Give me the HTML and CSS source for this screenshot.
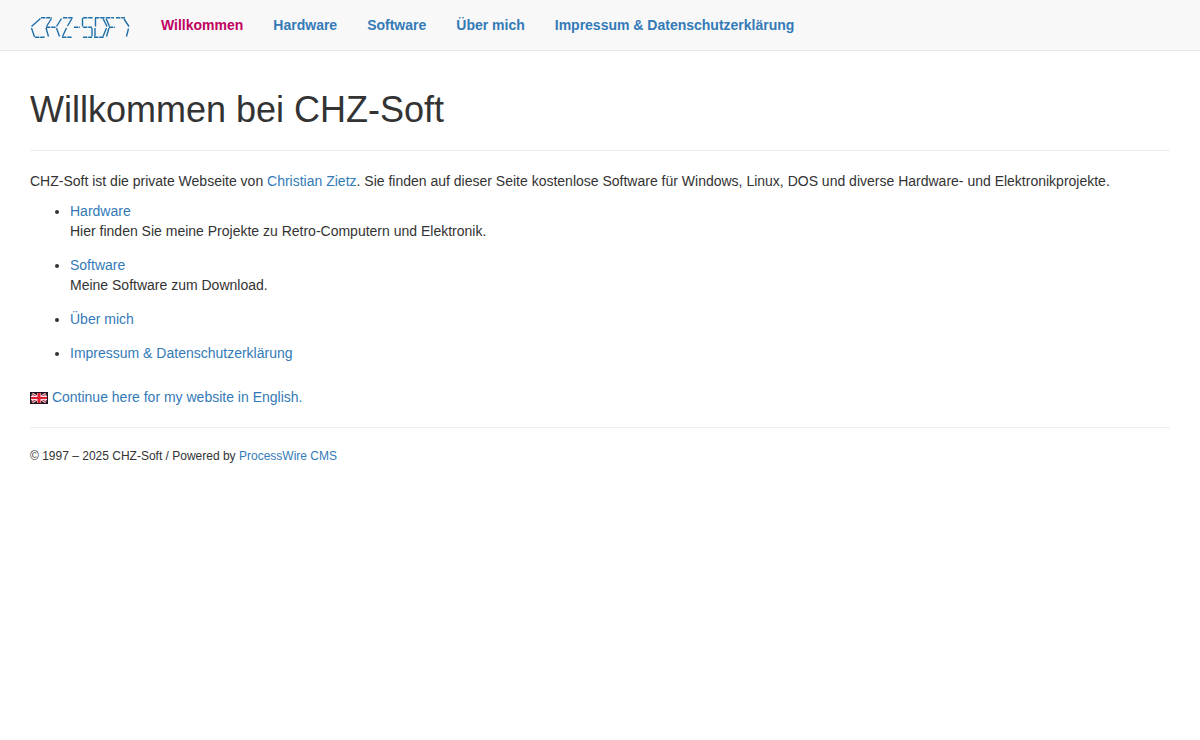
FILE: index.html
```html
<!DOCTYPE html>
<html lang="de">
<head>
	<meta charset="UTF-8">
	<meta name="viewport" content="width=device-width, initial-scale=1">
	<title>Willkommen bei CHZ-Soft</title>
	<link rel="stylesheet" href="styles.css">
</head>
<body>
	<nav class="navbar">
		<a class="brand" href="#" aria-label="CHZ-Soft">
			<svg class="logo" width="101" height="24" viewBox="0 0 101 24">
				<!-- horizontal segments -->
				<g stroke-width="1.4" stroke-dasharray="4.4 .8">
					<path d="M11 2.7H22M5 22.3H15M16 12.3H26M33 2.7H43M32 22.3H42M44 12.3H50"/>
					<path d="M53 2.7H63M53 12.3H62M53 22.3H62M65 2.7H75M64 22.3H74M76 2.7H84M79 12.3H85M86 2.7H95"/>
				</g>
				<!-- slanted segments -->
				<g stroke-width="1.4">
					<path d="M10.500 3.500L1.500 11.500M1.500 13L4.500 22M21.500 3.500L16.500 11.500M16 13L18.500 21.500M31.500 3.500L26.500 11.500M26.500 13L29.500 21.500M42 3.500L37.500 11M36.500 13L32.500 21.500"/>
					<path d="M52.500 3V11.500M62 13V21.500M65.500 3V11.500M65 13V21.500M73 3.500L77 11.500M76.500 13L73 21.500M76 3.500L79.500 11.500M79 13L76.500 21.500M94 4L99 11.500M98.500 13.500L96.500 21.500"/>
				</g>
			</svg>
		</a>
		<ul class="menu">
			<li class="active"><a href="#">Willkommen</a></li>
			<li><a href="#">Hardware</a></li>
			<li><a href="#">Software</a></li>
			<li><a href="#">Über mich</a></li>
			<li><a href="#">Impressum &amp; Datenschutzerklärung</a></li>
		</ul>
	</nav>
	<main class="container">
		<div class="page-header">
			<h1>Willkommen bei CHZ-Soft</h1>
		</div>
		<p>CHZ-Soft ist die private Webseite von <a href="#">Christian Zietz</a>. Sie finden auf dieser Seite kostenlose Software für Windows, Linux, DOS und diverse Hardware- und Elektronikprojekte.</p>
		<ul class="topics">
			<li><a href="#">Hardware</a><br>Hier finden Sie meine Projekte zu Retro-Computern und Elektronik.</li>
			<li><a href="#">Software</a><br>Meine Software zum Download.</li>
			<li><a href="#">Über mich</a></li>
			<li><a href="#">Impressum &amp; Datenschutzerklärung</a></li>
		</ul>
		<p class="language">
			<svg class="flag" width="18" height="12" viewBox="0 0 18 12">
				<path fill="#201420" d="M0 0h18v12H0z"/>
				<path stroke="#f0ccd4" stroke-width="3" d="M2 2l14 8M16 2L2 10"/>
				<path stroke="#a83048" stroke-width="1" d="M2 2l14 8M16 2L2 10"/>
				<path stroke="#f8dce0" stroke-width="4" d="M9 1v10M1 6h16"/>
				<path stroke="#e01c30" stroke-width="3" d="M9 1v10"/>
				<path stroke="#e01c30" stroke-width="2" d="M1 6h16"/>
			</svg>
			<a href="#">Continue here for my website in English.</a>
		</p>
		<footer>
			<small>© 1997 – 2025 CHZ-Soft / Powered by <a href="#">ProcessWire CMS</a></small>
		</footer>
	</main>
</body>
</html>
```
FILE: styles.css
```css
*{box-sizing:border-box}
body{
	margin:0;
	font-family:"Liberation Sans", Arial, sans-serif;
	font-size:14px;
	line-height:20px;
	color:#333;
	background-color:#fff;
}
a{
	color:#337ab7;
	text-decoration:none;
}
.navbar{
	display:flex;
	min-height:51px;
	padding:0 15px;
	background-color:#f8f8f8;
	border-bottom:1px solid #e7e7e7;
}
.brand{
	padding:15px 15px 0;
}
.logo{
	display:block;
	fill:none;
	stroke:#1f6fa8;
}
.menu{
	display:flex;
	flex-wrap:wrap;
	margin:0;
	padding:0;
	list-style:none;
}
.menu a{
	display:block;
	padding:15px;
	font-weight:bold;
}
.menu .active a{
	color:#c00060;
}
.container{
	padding:0 30px;
}
.page-header{
	margin:39px 0 20px;
	padding-bottom:20px;
	border-bottom:1px solid #eee;
}
h1{
	margin:0;
	font-size:36px;
	font-weight:500;
	line-height:40px;
}
p{
	margin:0 0 10px;
}
.topics{
	margin:0 0 24px;
	padding-left:40px;
}
.topics li{
	margin-bottom:14px;
}
.flag{
	vertical-align:middle;
}
.language{
	margin-bottom:20px;
}
footer{
	padding-top:17px;
	border-top:1px solid #eee;
}
small{
	font-size:12px;
}
```
